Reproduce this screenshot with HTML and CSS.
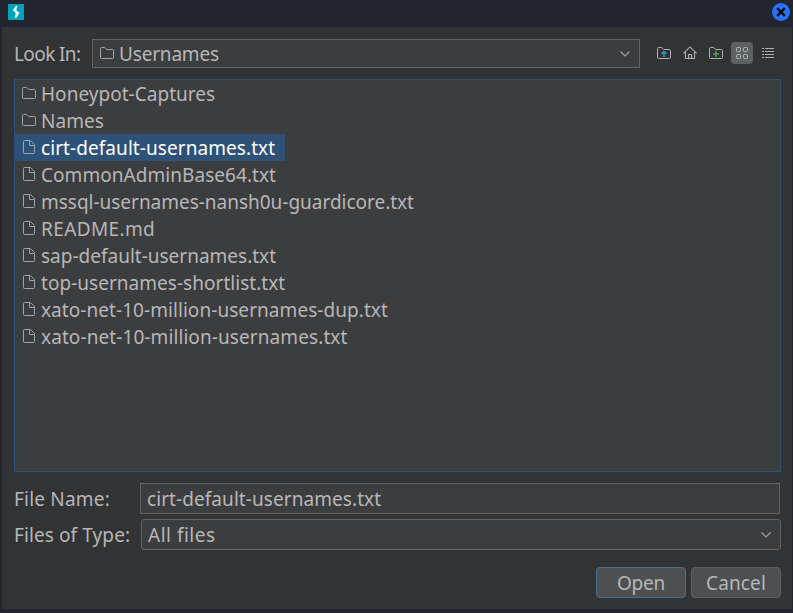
FILE: index.html
```
<!DOCTYPE html>
<html lang="en">
<head>
<meta charset="utf-8">
<title>Open</title>
<link rel="stylesheet" href="styles.css">
</head>
<body>
<svg class="defs" width="0" height="0">
  <symbol id="folder" viewBox="0 0 14 12"><path d="M.5 10.5V1.5Q.5.5 1.5.5H4.7L6.7 2.5H12.5Q13.5 2.5 13.5 3.5V10.5Q13.5 11.5 12.5 11.5H1.5Q.5 11.5.5 10.5Z" fill="none" stroke="currentColor"/></symbol>
  <symbol id="file" viewBox="0 0 12 14"><path d="M1.5.5H7.5L11.5 4.5V12.5Q11.5 13.5 10.5 13.5H1.5Q.5 13.5.5 12.5V1.5Q.5.5 1.5.5ZM6.5.5V5.5H11.5" fill="none" stroke="currentColor"/></symbol>
  <symbol id="chevron" viewBox="0 0 10 6"><path d="M.5.5L5 5L9.500.5" fill="none" stroke="currentColor" stroke-width="1.100"/></symbol>
</svg>
<div class="window">
  <header class="titlebar">
    <svg class="logo" viewBox="0 0 16 16"><rect width="16" height="16" fill="#00a2bc"/><path d="M8.800 2L6 6.300L10.300 9L7.300 13.800" fill="none" stroke="#f4fbfc" stroke-width="1.900"/><path d="M8.500 2L4.800 6.700L8.500 7.500ZM7.500 14L11.200 9L7.500 8Z" fill="#f4fbfc"/></svg>
    <svg class="close" viewBox="0 0 18 18"><circle cx="9" cy="9" r="9" fill="#2573f7"/><path d="M6 6L12 12M12 6L6 12" stroke="#05070c" stroke-width="2.300" stroke-linecap="square"/></svg>
  </header>
  <main class="dialog">
    <div class="lookin">
      <span class="label t-look">Look In:</span>
      <div class="combo dir"><svg class="folder"><use href="#folder"/></svg><span class="t-dir">Usernames</span><svg class="chevron"><use href="#chevron"/></svg></div>
      <nav class="tools">
        <span class="tool"><svg width="14" height="12" viewBox="0 0 14 12"><use href="#folder"/><path d="M7 10V5M4.500 7L7 4.500L9.500 7" fill="none" stroke="#3592c4" stroke-width="1.500"/></svg></span>
        <span class="tool"><svg width="14" height="14" viewBox="0 0 14 14"><path d="M.4 7.300L7 .9L13.600 7.300M2.500 6V12.500H11.500V6M5.500 12.500V8.500H8.500V12.500" fill="none" stroke="currentColor" stroke-width="1.100"/></svg></span>
        <span class="tool"><svg width="14" height="12" viewBox="0 0 14 12"><use href="#folder"/><path d="M7 4V10M4 7H10" stroke="#499c54" stroke-width="1.700"/></svg></span>
        <span class="tool active"><svg width="12" height="12" viewBox="0 0 12 12" fill="none" stroke="currentColor"><rect x=".5" y=".5" width="4" height="4" rx=".7"/><rect x="7.500" y=".5" width="4" height="4" rx=".7"/><rect x=".5" y="7.500" width="4" height="4" rx=".7"/><rect x="7.500" y="7.500" width="4" height="4" rx=".7"/></svg></span>
        <span class="tool"><svg width="12" height="10" viewBox="0 0 12 10"><path d="M0 .5H2M3 .5H12M0 3.500H2M3 3.500H12M0 6.500H2M3 6.500H12M0 9.500H2M3 9.500H12" stroke="currentColor"/></svg></span>
      </nav>
    </div>
    <ul class="files">
      <li><svg class="folder"><use href="#folder"/></svg><span class="n1">Honeypot-Captures</span></li>
      <li><svg class="folder"><use href="#folder"/></svg><span class="n2">Names</span></li>
      <li class="selected"><svg class="file"><use href="#file"/></svg><span class="n3">cirt-default-usernames.txt</span></li>
      <li><svg class="file"><use href="#file"/></svg><span class="n4">CommonAdminBase64.txt</span></li>
      <li><svg class="file"><use href="#file"/></svg><span class="n5">mssql-usernames-nansh0u-guardicore.txt</span></li>
      <li><svg class="file"><use href="#file"/></svg><span class="n6">README.md</span></li>
      <li><svg class="file"><use href="#file"/></svg><span class="n7">sap-default-usernames.txt</span></li>
      <li><svg class="file"><use href="#file"/></svg><span class="n8">top-usernames-shortlist.txt</span></li>
      <li><svg class="file"><use href="#file"/></svg><span class="n9">xato-net-10-million-usernames-dup.txt</span></li>
      <li><svg class="file"><use href="#file"/></svg><span class="n10">xato-net-10-million-usernames.txt</span></li>
    </ul>
    <div class="row name-row"><span class="label t-name">File Name:</span><div class="field"><span class="n3">cirt-default-usernames.txt</span></div></div>
    <div class="row"><span class="label t-type">Files of Type:</span><div class="combo type"><span class="t-all">All files</span><svg class="chevron"><use href="#chevron"/></svg></div></div>
    <div class="actions"><button class="primary"><span class="t-open">Open</span></button><button><span class="t-cancel">Cancel</span></button></div>
  </main>
</div>
</body>
</html>
```
FILE: styles.css
```
* { box-sizing: border-box; }
body { margin: 0; background: #22252f; color: #b7b7b7; font: 19px/27px "Noto Sans", sans-serif; overflow: hidden; }
.defs { display: block; height: 0; }
svg { display: block; flex: none; }
span { white-space: nowrap; }
.window { width: 793px; height: 613px; padding: 0 1px 4px 2px; display: flex; flex-direction: column; }
.titlebar { height: 27px; flex: none; display: flex; justify-content: space-between; padding: 4px 2px 0 6px; }
.logo { width: 16px; height: 16px; }
.close { width: 18px; height: 18px; margin-top: -1px; }
.dialog { flex: 1; background: #313335; padding: 12px 11px 0 12px; display: flex; flex-direction: column; }
.lookin { display: flex; height: 29px; align-items: center; }
.label { padding-top: 2px; }
.lookin .label { width: 78px; flex: none; }
.combo { display: flex; align-items: center; border: 1px solid #646464; background: #3c3d3f; height: 31px; }
.combo span { padding-top: 2px; }
.combo .chevron { margin-left: auto; width: 10px; height: 6px; margin-right: 9px; color: #a0a3a6; }
.dir { width: 548px; height: 29px; padding-left: 7px; }
.dir .folder { margin: 0 5px 1px 0; }
.folder { width: 14px; height: 12px; color: #9aa7b0; }
.file { width: 12px; height: 14px; color: #9aa7b0; }
.tools { display: flex; gap: 4px; margin: 0 0 1px 13px; color: #afb1b3; }
.tool { width: 22px; height: 22px; display: flex; align-items: center; justify-content: center; border-radius: 4px; }
.active { background: #5c6164; }
.files { list-style: none; margin: 11px 0 0; padding: 0; width: 767px; height: 393px; border: 1px solid #2f4f74; background: #3c3d3f; display: flex; flex-direction: column; align-items: flex-start; }
.files li { height: 27px; display: flex; align-items: center; padding-left: 7px; }
.files span { padding-top: 2px; }
.files .folder { margin: 0 5px 1px 0; }
.files .file { margin: 0 6px 1px 1px; }
.files .selected { background: #2d5177; color: #fff; width: 270px; }
.row { display: flex; align-items: center; height: 31px; margin-top: 5px; }
.name-row { margin-top: 11px; }
.row .label { width: 126px; flex: none; }
.field { width: 640px; height: 31px; border: 1px solid #646464; background: #3c3d3f; padding: 2px 0 0 6px; }
.type { margin-left: 1px; width: 640px; padding-left: 6px; border-radius: 3px; }
.actions { display: flex; justify-content: flex-end; gap: 5px; margin-top: 17px; width: 767px; }
button { width: 90px; height: 31px; padding: 2px 0 0; font: inherit; color: inherit; background: #4c5052; border: 1px solid #5e6060; border-radius: 4px; }
.primary { border-color: #4c708c; }
/* Per-string tracking */
.t-look { letter-spacing: -.6px; }
.t-dir { letter-spacing: -.18px; }
.n1, .n2 { letter-spacing: .03px; }
.n3 { letter-spacing: .07px; }
.n4 { letter-spacing: .05px; }
.n5 { letter-spacing: -.02px; }
.n6 { letter-spacing: .38px; }
.n8 { letter-spacing: .03px; }
.n9 { letter-spacing: .06px; }
.n10 { letter-spacing: .09px; }
.t-name { letter-spacing: .2px; }
.t-type { letter-spacing: .1px; }
.t-all { letter-spacing: .5px; }
.t-open { letter-spacing: -.2px; }
.t-cancel { letter-spacing: .15px; }
```
